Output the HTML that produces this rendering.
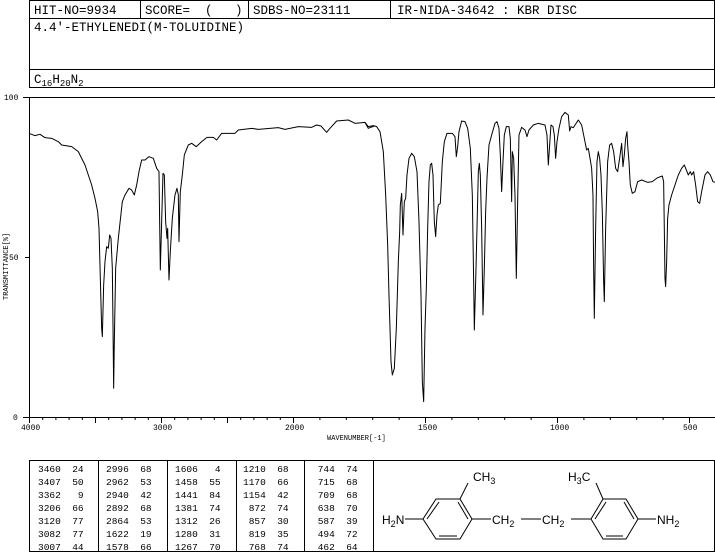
<!DOCTYPE html>
<html><head><meta charset="utf-8"><style>
html,body{margin:0;padding:0;background:#fff;}
body{width:715px;height:553px;position:relative;overflow:hidden;font-family:"Liberation Mono",monospace;color:#000;}
svg{position:absolute;left:0;top:0;}
svg text{white-space:pre;}
</style></head><body>
<svg width="715" height="553" viewBox="0 0 715 553" xmlns="http://www.w3.org/2000/svg" font-family="Liberation Mono, monospace">
<g fill="none" stroke="#000" stroke-width="1">
<rect x="29.5" y="0.5" width="685" height="87"/>
<line x1="29" y1="18.5" x2="715" y2="18.5"/>
<line x1="29" y1="69.5" x2="715" y2="69.5"/>
<line x1="140.5" y1="0" x2="140.5" y2="18"/>
<line x1="248.5" y1="0" x2="248.5" y2="18"/>
<line x1="390.5" y1="0" x2="390.5" y2="18"/>
</g>
<g font-size="12.5" fill="#000">
<text x="34" y="14">HIT-NO=9934</text>
<text x="145" y="14">SCORE=  (   )</text>
<text x="253" y="14">SDBS-NO=23111</text>
<text x="397" y="14">IR-NIDA-34642 : KBR DISC</text>
<text x="34" y="31">4.4'-ETHYLENEDI(M-TOLUIDINE)</text>
<text x="34" y="83">C<tspan font-size="9" dy="3">16</tspan><tspan dy="-3">H</tspan><tspan font-size="9" dy="3">20</tspan><tspan dy="-3">N</tspan><tspan font-size="9" dy="3">2</tspan></text>
</g>
<g fill="none" stroke="#000" stroke-width="1">
<rect x="29.5" y="97.5" width="686" height="320"/>
<line x1="23" y1="97.5" x2="29" y2="97.5"/>
<line x1="25" y1="257.5" x2="29" y2="257.5"/>
<line x1="23" y1="417.5" x2="29" y2="417.5"/>
</g>
<g stroke="#000" stroke-width="1">
<path d="M29.5 417v6M42.7 417v3M55.9 417v3M69.1 417v3M82.3 417v3M95.5 417v6M108.7 417v3M121.9 417v3M135.1 417v3M148.3 417v3M161.5 417v6M174.7 417v3M187.9 417v3M201.1 417v3M214.3 417v3M227.5 417v6M240.7 417v3M253.9 417v3M267.1 417v3M280.3 417v3M293.5 417v6M319.9 417v3M346.3 417v3M372.7 417v3M399.1 417v3M425.5 417v6M451.9 417v3M478.3 417v3M504.7 417v3M531.1 417v3M557.5 417v6M583.9 417v3M610.3 417v3M636.7 417v3M663.1 417v3M689.5 417v6"/>
</g>
<g font-size="8" fill="#000">
<text x="4" y="100">100</text>
<text x="9" y="260">50</text>
<text x="13" y="420">0</text>
<text x="21" y="430">4000</text>
<text x="153" y="430">3000</text>
<text x="285" y="430">2000</text>
<text x="418" y="430">1500</text>
<text x="550" y="430">1000</text>
<text x="683" y="430">500</text>
<text x="327" y="440" font-size="7">WAVENUMBER[-1]</text>
<text transform="translate(8,300) rotate(-90)" font-size="7">TRANSMITTANCE[%]</text>
</g>
<g fill="none" stroke="#000" stroke-width="3" stroke-linejoin="round">
<polyline transform="translate(25,95) scale(0.3333)" points="12,115 30,122 45,118 60,128 80,130 100,140 110,150 140,155 160,170 180,210 200,270 210,310 218,350 222,400 226,550 230,700 232,725 236,570 240,500 245,455 250,460 254,420 258,430 262,520 264,690 266,880 268,740 272,520 280,430 292,320 300,300 312,280 320,285 328,300 335,270 342,230 350,195 360,195 372,185 385,190 395,220 402,230 404,380 406,525 410,380 414,235 418,240 422,380 426,430 428,400 432,555 436,470 442,370 450,300 456,280 460,300 462,440 466,290 472,240 478,180 490,150 500,145 514,155 530,140 546,127 565,127 575,135 590,115 630,115 640,105 680,100 700,103 760,98 780,103 820,95 860,97 875,90 888,93 905,112 915,100 935,78 970,75 990,85 1020,82 1030,100 1048,93"/>
<polyline transform="translate(365,95) scale(0.3333)" points="0,82 10,95 25,92 35,95 45,110 55,170 62,300 68,450 72,600 78,800 82,840 88,820 94,700 100,500 104,410 106,330 110,295 114,420 118,320 122,310 126,240 132,190 140,175 148,185 156,230 162,380 168,600 172,860 176,920 180,700 184,580 188,400 192,260 196,210 200,205 204,240 208,380 212,425 216,360 220,330 226,325 232,200 238,140 246,115 262,115 270,125 274,185 278,155 282,110 290,78 300,80 308,100 316,160 322,300 326,560 328,705 332,560 336,400 340,230 343,205 346,240 350,400 354,660 358,520 362,350 366,250 372,150 380,120 390,85 396,80 402,100 406,180 410,290 414,200 418,120 424,95 432,95 436,130 440,320 442,170 446,190 450,300 454,550 458,320 462,120 470,97 480,105 486,125 492,105 505,90 520,85 540,90 546,120 550,210 554,150 558,90 564,95 568,120 572,190 576,140 582,100 590,65 600,52 610,60 614,108 618,95 625,98 640,75 650,90 660,140 665,165 670,160 676,195 680,220 684,300 686,520 688,670 692,400 696,200 700,170 704,190 708,240 712,350 716,560 718,620 722,400 728,200 734,150 740,145 746,170 752,220 758,230 764,190 770,145 774,215 778,180 782,130 786,110 788,150 792,200 796,270 802,295 810,290 818,260 830,255 848,262 862,260 878,248 892,243 896,260 898,400 900,550 902,575 905,500 908,370 912,330 920,300 930,270 940,240 950,220 958,210 964,225 970,240 976,230 980,240 986,230 992,270 998,320 1004,325 1010,290 1020,240 1028,230 1036,240 1044,260 1050,262"/>
</g>
<g fill="none" stroke="#000" stroke-width="1">
<rect x="29.5" y="460.5" width="685" height="91"/>
<line x1="98.5" y1="460" x2="98.5" y2="552"/>
<line x1="167.5" y1="460" x2="167.5" y2="552"/>
<line x1="236.5" y1="460" x2="236.5" y2="552"/>
<line x1="304.5" y1="460" x2="304.5" y2="552"/>
<line x1="373.5" y1="460" x2="373.5" y2="552"/>
</g>
<g font-size="9.5" fill="#000">
<text x="38" y="472">3460  24</text><text x="38" y="485">3407  50</text><text x="38" y="498">3362   9</text><text x="38" y="511">3206  66</text><text x="38" y="524">3120  77</text><text x="38" y="537">3082  77</text><text x="38" y="550">3007  44</text>
<text x="106" y="472">2996  68</text><text x="106" y="485">2962  53</text><text x="106" y="498">2940  42</text><text x="106" y="511">2892  68</text><text x="106" y="524">2864  53</text><text x="106" y="537">1622  19</text><text x="106" y="550">1578  66</text>
<text x="175" y="472">1606   4</text><text x="175" y="485">1458  55</text><text x="175" y="498">1441  84</text><text x="175" y="511">1381  74</text><text x="175" y="524">1312  26</text><text x="175" y="537">1280  31</text><text x="175" y="550">1267  70</text>
<text x="243" y="472">1210  68</text><text x="243" y="485">1170  66</text><text x="243" y="498">1154  42</text><text x="243" y="511"> 872  74</text><text x="243" y="524"> 857  30</text><text x="243" y="537"> 819  35</text><text x="243" y="550"> 768  74</text>
<text x="312" y="472"> 744  74</text><text x="312" y="485"> 715  68</text><text x="312" y="498"> 709  68</text><text x="312" y="511"> 638  70</text><text x="312" y="524"> 587  39</text><text x="312" y="537"> 494  72</text><text x="312" y="550"> 462  64</text>
</g>
<g fill="none" stroke="#000" stroke-width="1">
<polygon points="423,519 436,499 460,499 472,519 460,539 436,539"/>
<line x1="427" y1="519" x2="439" y2="502"/>
<line x1="458" y1="502" x2="468" y2="519"/>
<line x1="439" y1="536" x2="457" y2="536"/>
<line x1="460" y1="499" x2="468" y2="483"/>
<line x1="405" y1="519" x2="423" y2="519"/>
<line x1="472" y1="519" x2="491" y2="519"/>
<line x1="521" y1="519" x2="541" y2="519"/>
<line x1="571" y1="519" x2="591" y2="519"/>
<polygon points="591,519 603,499 626,499 638,519 626,539 603,539"/>
<line x1="595" y1="519" x2="606" y2="502"/>
<line x1="624" y1="502" x2="634" y2="519"/>
<line x1="606" y1="536" x2="623" y2="536"/>
<line x1="603" y1="499" x2="596" y2="483"/>
<line x1="638" y1="519" x2="656" y2="519"/>
</g>
<g font-family="Liberation Sans, sans-serif" font-size="12" fill="#000">
<text x="473" y="481">CH<tspan font-size="9" dy="3">3</tspan></text>
<text x="568" y="481">H<tspan font-size="9" dy="3">3</tspan><tspan dy="-3">C</tspan></text>
<text x="382" y="524">H<tspan font-size="9" dy="3">2</tspan><tspan dy="-3">N</tspan></text>
<text x="492" y="524">CH<tspan font-size="9" dy="3">2</tspan></text>
<text x="542" y="524">CH<tspan font-size="9" dy="3">2</tspan></text>
<text x="657" y="524">NH<tspan font-size="9" dy="3">2</tspan></text>
</g>
</svg>
</body></html>
